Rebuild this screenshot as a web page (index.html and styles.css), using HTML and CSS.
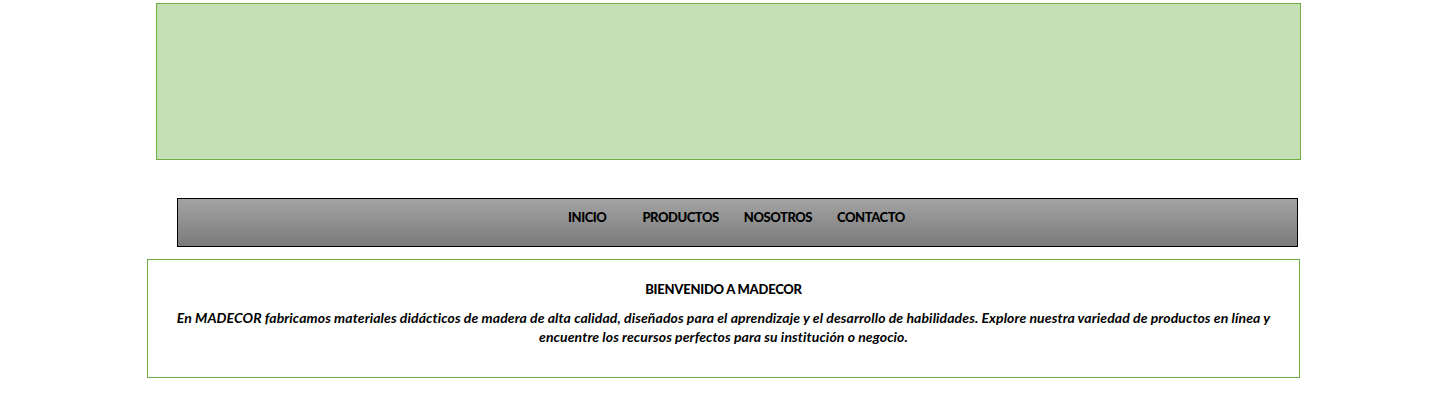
FILE: index.html
```html
<!DOCTYPE html>
<html lang="es">
<head>
<meta charset="utf-8">
<title>MADECOR</title>
<link rel="stylesheet" href="styles.css">
</head>
<body>
<div class="page">
  <header class="banner"></header>
  <nav class="menu">
    <a class="menu-item menu-first" href="#">INICIO</a>
    <a class="menu-item" href="#">PRODUCTOS</a>
    <a class="menu-item" href="#">NOSOTROS</a>
    <a class="menu-item" href="#">CONTACTO</a>
  </nav>
  <section class="welcome">
    <h1 class="welcome-title">BIENVENIDO A MADECOR</h1>
    <p class="welcome-text">En MADECOR fabricamos materiales didácticos de madera de alta calidad, diseñados para el aprendizaje y el desarrollo de habilidades. Explore nuestra variedad de productos en línea y encuentre los recursos perfectos para su institución o negocio.</p>
  </section>
</div>
</body>
</html>
```

FILE: styles.css
```css
html, body {
  margin: 0;
  padding: 0;
  background: #ffffff;
}

.page {
  display: flex;
  flex-direction: column;
  align-items: flex-start;
  padding-top: 3px;
  font-family: Lato, "Liberation Sans", sans-serif;
  color: #000;
}

.banner {
  box-sizing: border-box;
  width: 1145px;
  height: 157px;
  margin-left: 156px;
  background: #c5e0b4;
  border: 1px solid #70ad47;
}

.menu {
  box-sizing: border-box;
  width: 1121px;
  height: 49px;
  margin-left: 177px;
  margin-top: 38px;
  padding-top: 10px;
  padding-right: 2px;
  display: flex;
  justify-content: center;
  align-items: flex-start;
  gap: 25px;
  border: 1px solid #000;
  background: linear-gradient(to bottom, #a3a3a3 0%, #7b7b7b 100%);
}

.menu-item {
  font-size: 13px;
  line-height: 16px;
  font-weight: 900;
  color: #000;
  text-decoration: none;
  letter-spacing: -0.45px;
}

.menu-first {
  margin-right: 11px;
}

.welcome {
  box-sizing: border-box;
  width: 1153px;
  height: 119px;
  margin-left: 147px;
  margin-top: 12px;
  padding: 21px 20px 0;
  border: 1px solid #70ad47;
  text-align: center;
}

.welcome-title {
  margin: 0;
  font-size: 13px;
  line-height: 16px;
  font-weight: 900;
  letter-spacing: -0.25px;
}

.welcome-text {
  margin: 11px 0 0;
  font-size: 14px;
  line-height: 19px;
  font-weight: 700;
  font-style: italic;
  letter-spacing: 0.09px;
}
```
